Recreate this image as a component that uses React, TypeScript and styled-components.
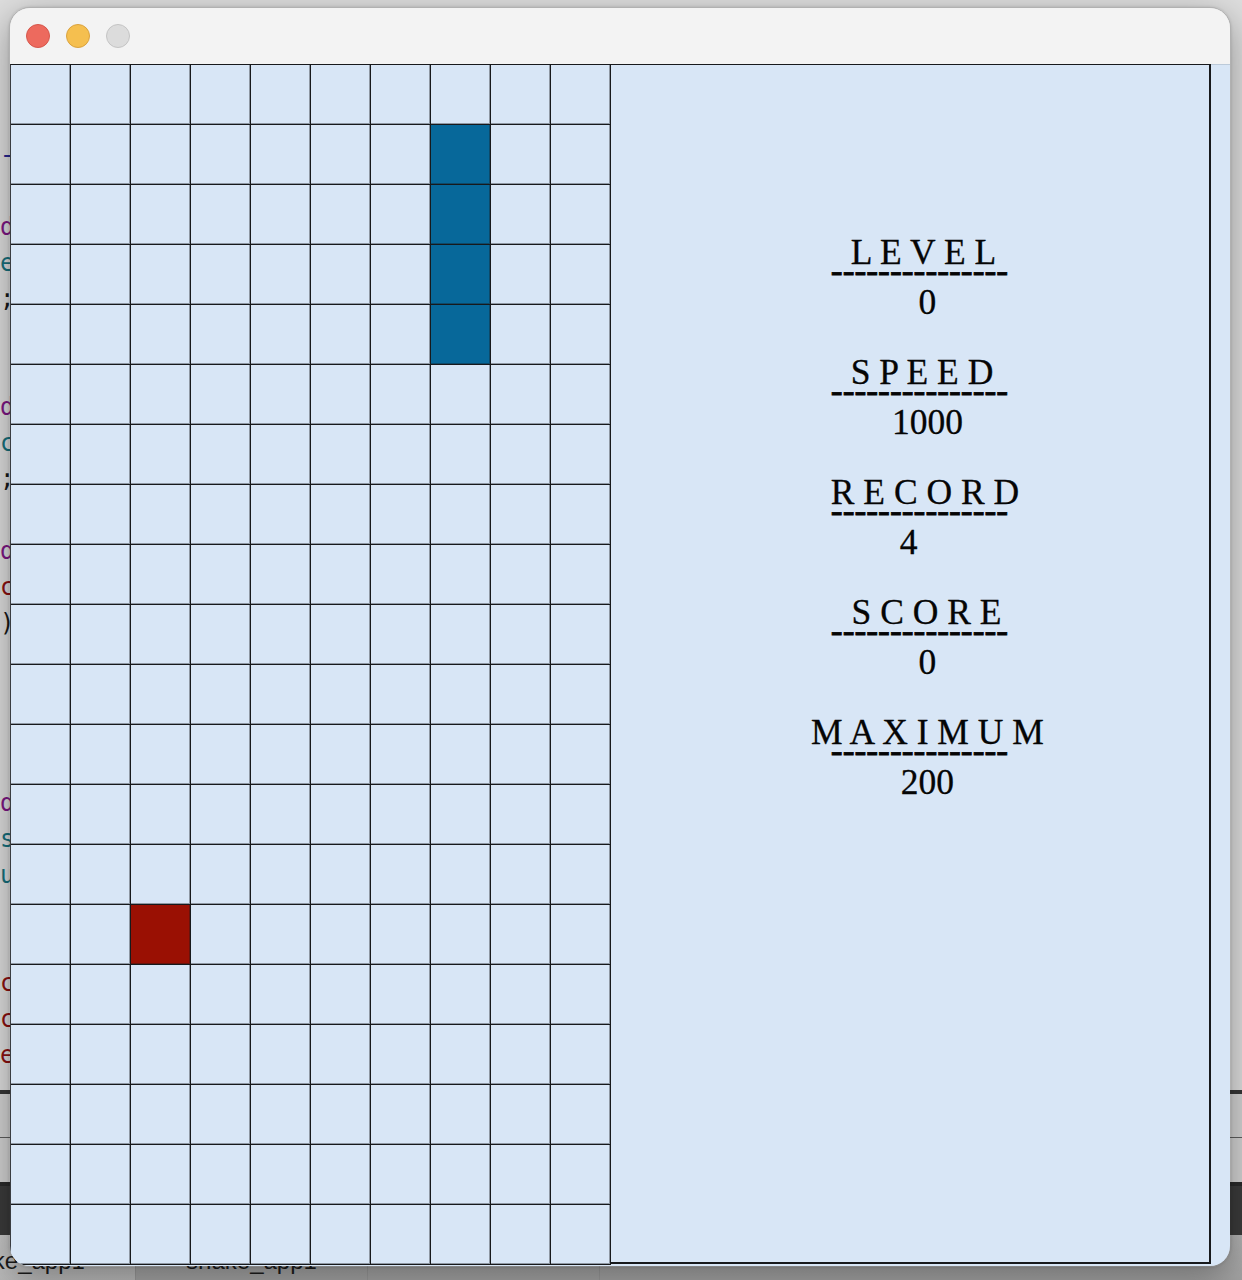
import React from 'react';
import styled, { createGlobalStyle } from 'styled-components';

const GlobalStyle = createGlobalStyle`
  html, body { margin: 0; padding: 0; }
  body { background: #d9d9d9; font-family: "Liberation Sans", Arial, sans-serif; }
`;

type Tone = 'navy' | 'purple' | 'teal' | 'red' | 'plain';
const toneColor: Record<Tone, string> = {
  navy: '#26268f',
  purple: '#7d1683',
  teal: '#17707d',
  red: '#8c1010',
  plain: '#1a1a1a',
};

const LINE = '#17191c';

const Desktop = styled.div`
  position: relative;
  width: 1242px;
  height: 1280px;
  overflow: hidden;
  display: flex;
  flex-direction: column;
  background: #dcdcdc;
`;

const CodeArea = styled.div`
  height: 1090px;
  flex-shrink: 0;
  box-sizing: border-box;
  padding-top: 137px;
  background: #dedede;
  font-family: "DejaVu Sans Mono", "Liberation Mono", monospace;
  font-size: 24px;
  line-height: 36px;
`;

const CodeLine = styled.div<{ $tone: Tone }>`
  height: 36px;
  white-space: pre;
  color: ${(p) => toneColor[p.$tone]};
`;

const Divider = styled.div`
  height: 4px;
  flex-shrink: 0;
  background: #363636;
`;

const SubPanel = styled.div`
  height: 88px;
  flex-shrink: 0;
  background: #d3d3d3;
`;

const SubPanelHeader = styled.div`
  height: 44px;
  box-sizing: border-box;
  border-bottom: 1px solid #5e5e5e;
`;

const Terminal = styled.div`
  height: 53px;
  flex-shrink: 0;
  box-sizing: border-box;
  background: #3b3b3b;
  border-top: 4px solid #2a2a2a;
`;

const TabBar = styled.div`
  height: 45px;
  flex-shrink: 0;
  display: flex;
  margin-left: -96px;
  background: linear-gradient(#b4b4b4, #a2a2a2);
`;

const Tab = styled.div<{ $active?: boolean }>`
  width: 232px;
  flex-shrink: 0;
  box-sizing: border-box;
  padding-top: 7px;
  line-height: 38px;
  text-align: center;
  font-family: "Liberation Sans", Arial, sans-serif;
  font-size: 24px;
  color: #1c1c1c;
  border-right: 1px solid #999;
  background: ${(p) => (p.$active ? 'linear-gradient(#c8c8c8, #b8b8b8)' : 'transparent')};
`;

const Window = styled.div`
  position: absolute;
  left: 9px;
  top: 7px;
  width: 1220px;
  height: 1258px;
  border: 1px solid rgba(0, 0, 0, 0.2);
  border-radius: 21px;
  overflow: hidden;
  display: flex;
  flex-direction: column;
  box-shadow: 0 10px 36px rgba(0, 0, 0, 0.35), 0 0 3px rgba(0, 0, 0, 0.15);
`;

const TitleBar = styled.div`
  height: 56px;
  flex-shrink: 0;
  box-sizing: border-box;
  background: #f3f3f3;
  display: flex;
  align-items: center;
  padding-left: 16px;
  gap: 16px;
`;

type LightKind = 'close' | 'min' | 'zoom';
const lightColors: Record<LightKind, [string, string]> = {
  close: ['#ed6a5e', '#d5574c'],
  min: ['#f5bf4f', '#d9a23f'],
  zoom: ['#dcdcdc', '#c4c4c4'],
};

const Light = styled.div<{ $kind: LightKind }>`
  width: 24px;
  height: 24px;
  box-sizing: border-box;
  border-radius: 50%;
  background: ${(p) => lightColors[p.$kind][0]};
  border: 1px solid ${(p) => lightColors[p.$kind][1]};
`;

const Content = styled.div`
  flex: 1;
  background: #d8e6f6;
  border-top: 1px solid #bccad9;
`;

const GameRow = styled.div`
  display: flex;
  align-items: flex-start;
  margin-top: -1px;
`;

const Board = styled.div`
  display: grid;
  grid-template-columns: repeat(10, 60px);
  grid-auto-rows: 60px;
  border-top: 1px solid ${LINE};
  border-left: 1px solid #3a3c40;
`;

type CellKind = 'empty' | 'snake' | 'food';
const cellColor: Record<CellKind, string> = {
  empty: '#d8e6f6',
  snake: '#07689a',
  food: '#9a1003',
};

const Cell = styled.div<{ $kind: CellKind }>`
  box-sizing: border-box;
  border-right: 1px solid ${LINE};
  border-bottom: 1px solid ${LINE};
  box-shadow: inset -1px -1px 0 rgba(23, 25, 28, 0.38);
  background: ${(p) => cellColor[p.$kind]};
`;

const Panel = styled.div`
  width: 600px;
  height: 1200px;
  box-sizing: border-box;
  border-top: 1px solid ${LINE};
  border-right: 2px solid ${LINE};
  border-bottom: 2px solid ${LINE};
  padding: 169px 0 0 35px;
  display: flex;
  flex-direction: column;
  align-items: center;
  gap: 20px;
  font-family: "Liberation Serif", "Times New Roman", serif;
  color: #050505;
`;

const StatBlock = styled.div`
  display: flex;
  flex-direction: column;
  align-items: center;
`;

const StatTitle = styled.div<{ $nudge: number }>`
  font-size: 35.5px;
  line-height: 36px;
  white-space: pre;
  -webkit-text-stroke: 0.3px #050505;
  padding-right: ${(p) => p.$nudge}px;
`;

const StatRule = styled.div`
  font-size: 35.5px;
  line-height: 0;
  height: 0;
  white-space: pre;
  -webkit-text-stroke: 0.8px #050505;
  padding-right: 16px;
`;

const StatValue = styled.div<{ $nudge: number }>`
  font-size: 35.5px;
  line-height: 64px;
  -webkit-text-stroke: 0.3px #050505;
  padding-right: ${(p) => p.$nudge}px;
`;

const codeLines: (null | [Tone, string])[] = [
  ['navy', '-> None:'],
  null,
  ['purple', 'def draw_board(self):'],
  ['teal', 'elf.canvas.delete("all")'],
  ['plain', ';'],
  null,
  null,
  ['purple', 'def draw_snake(self):'],
  ['teal', 'canvas.create_rectangle()'],
  ['plain', ';'],
  null,
  ['purple', 'def move(self):'],
  ['red', 'c'],
  ['plain', ')'],
  null,
  null,
  null,
  null,
  ['purple', 'def update(self):'],
  ['teal', 'score += 1'],
  ['teal', 'update_labels()'],
  null,
  null,
  ['red', 'c'],
  ['red', 'c'],
  ['red', 'e'],
];

const stats: { title: string; value: string; titleNudge: number; valueNudge: number }[] = [
  { title: 'L E V E L', value: '0', titleNudge: 8, valueNudge: 0 },
  { title: 'S P E E D', value: '1000', titleNudge: 11, valueNudge: 0 },
  { title: 'R E C O R D', value: '4', titleNudge: 5, valueNudge: 38 },
  { title: 'S C O R E', value: '0', titleNudge: 2, valueNudge: 0 },
  { title: 'M A X I M U M', value: '200', titleNudge: 0, valueNudge: 0 },
];

const COLS = 10;
const ROWS = 20;
const snake = new Set(['7-1', '7-2', '7-3', '7-4']);
const food = '2-14';

function cellKind(c: number, r: number): CellKind {
  const key = `${c}-${r}`;
  if (snake.has(key)) return 'snake';
  if (key === food) return 'food';
  return 'empty';
}

export default function App() {
  const cells: React.ReactNode[] = [];
  for (let r = 0; r < ROWS; r++) {
    for (let c = 0; c < COLS; c++) {
      cells.push(<Cell key={`${c}-${r}`} $kind={cellKind(c, r)} />);
    }
  }

  return (
    <>
      <GlobalStyle />
      <Desktop>
        <CodeArea>
          {codeLines.map((line, i) =>
            line ? (
              <CodeLine key={i} $tone={line[0]}>
                {line[1]}
              </CodeLine>
            ) : (
              <CodeLine key={i} $tone="plain" />
            )
          )}
        </CodeArea>
        <Divider />
        <SubPanel>
          <SubPanelHeader />
        </SubPanel>
        <Terminal />
        <TabBar>
          <Tab $active>snake_app1</Tab>
          <Tab>snake_app1</Tab>
          <Tab />
        </TabBar>

        <Window>
          <TitleBar>
            <Light $kind="close" />
            <Light $kind="min" />
            <Light $kind="zoom" />
          </TitleBar>
          <Content>
            <GameRow>
              <Board>{cells}</Board>
              <Panel>
                {stats.map((s) => (
                  <StatBlock key={s.title}>
                    <StatTitle $nudge={s.titleNudge}>{s.title}</StatTitle>
                    <StatRule>---------------</StatRule>
                    <StatValue $nudge={s.valueNudge}>{s.value}</StatValue>
                  </StatBlock>
                ))}
              </Panel>
            </GameRow>
          </Content>
        </Window>
      </Desktop>
    </>
  );
}
